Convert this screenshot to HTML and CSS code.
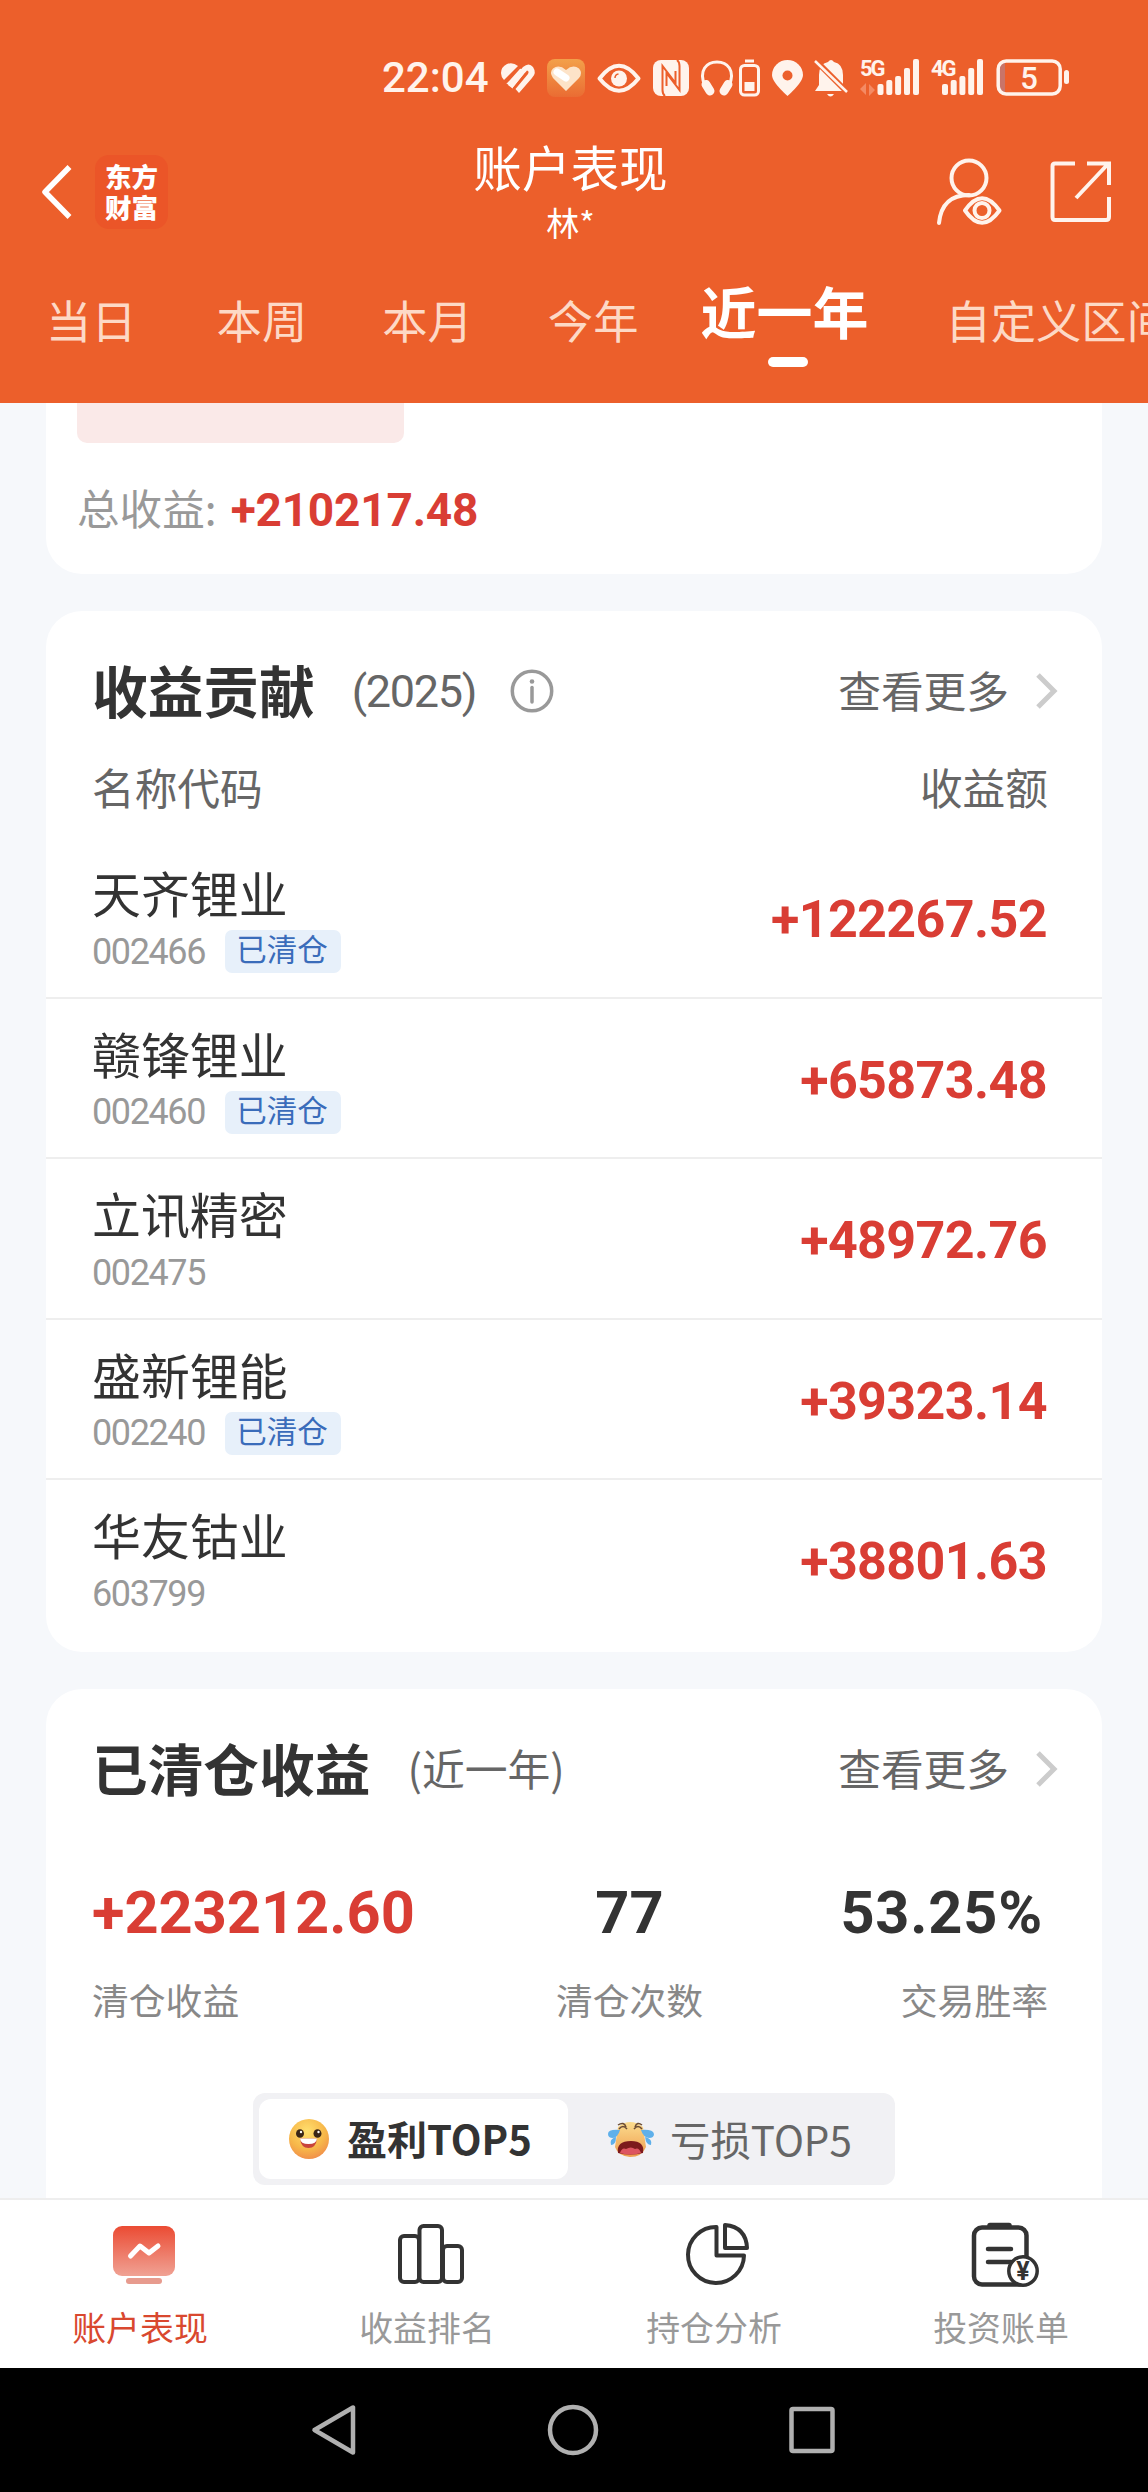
FILE: index.html
```html
<!DOCTYPE html>
<html lang="zh-CN">
<head>
  <meta charset="UTF-8" />
  <meta name="viewport" content="width=device-width, initial-scale=1.0" />
  <title>账户表现</title>
  <link rel="stylesheet" href="styles.css">
</head>
<body>

  <header class="header">
    <div class="status-bar">
      <span class="time">22:04</span>
      <svg width="34" height="38" viewBox="0 0 34 38" fill="#fff3ec">
        <path d="M17 7 Q12 3 6 5 Q0 8 0 14 Q0 18 3 21 Z"/>
        <path d="M7 26 L22 8 Q28 3 32 8 Q36 14 31 19 L18 34 L14.500 30 L27 15 Q28.500 12 26 11.500 L11.500 29.500 Z"/>
        <path d="M5 24 L18 9 L22 11 L9 27 Z"/>
        <path d="M5 24 L20 7.500 M12.500 29.500 L25 14" stroke="#ec5f2b" stroke-width="1.800"/>
      </svg>
      <svg width="38" height="38" viewBox="0 0 38 38">
        <defs><linearGradient id="hg" x1="0" y1="0" x2="0" y2="1"><stop offset="0" stop-color="#f3a04a"/><stop offset="1" stop-color="#ea6c33"/></linearGradient></defs>
        <rect width="38" height="38" rx="8" fill="url(#hg)"/>
        <path d="M19 32 L6 19 Q2 13 6 9.500 Q12 5 19 11 Q26 5 32 9.500 Q36 14 32 19 Z" fill="#fde3c8"/>
        <path d="M10 13 L19 19" stroke="#fff" stroke-width="7" stroke-linecap="round"/>
      </svg>
      <svg width="44" height="38" viewBox="0 0 44 38" fill="none" stroke="#fff3ec">
        <path d="M2.500 19.500 Q22 -6 41.500 19.500 Q22 44 2.500 19.500 Z" stroke-width="4" stroke-linejoin="round"/>
        <circle cx="22" cy="19.500" r="8" fill="#fff3ec" stroke="none"/>
        <path d="M18 19 Q18 15.500 21.500 15" stroke="#ec5f2b" stroke-width="1.500"/>
      </svg>
      <svg width="36" height="38" viewBox="0 0 36 38">
        <rect x="0" y="1" width="36" height="36" rx="8" fill="#fff3ec"/>
        <path d="M12 37 Q9.500 35 9.500 31 V7 L22.500 24 V12 M24 1 Q26.500 3 26.500 7 V31 L13.500 14 V27" fill="none" stroke="#ec5f2b" stroke-width="2"/>
      </svg>
      <svg width="59" height="38" viewBox="0 0 59 38" fill="none" stroke="#fff3ec">
        <path d="M4 27 C-3 11 6 3 16 3 C26 3 35 11 28 27" stroke-width="3"/>
        <path d="M5 25.500 L9 32 M27 25.500 L23 32" stroke-width="9" stroke-linecap="round"/>
        <rect x="39.500" y="6.500" width="18" height="29.500" rx="4" stroke-width="3"/>
        <path d="M44 2 H53" stroke-width="3"/>
        <rect x="43.500" y="23" width="10" height="9" fill="#fff3ec" stroke="none"/>
      </svg>
      <svg width="31" height="38" viewBox="0 0 31 38" fill="#fff3ec">
        <path d="M15.500 37 Q0 23 0 16 A15.500 15 0 0 1 31 16 Q31 23 15.500 37 Z"/>
        <circle cx="15.500" cy="16.500" r="5" fill="#ec5f2b"/>
      </svg>
      <svg width="33" height="38" viewBox="0 0 33 38" fill="#fff3ec">
        <path d="M0 32 L4 26 V16 Q4 5 13 3 Q16 -1 19 3 Q28 5 28 16 V28 L31 32 Z"/>
        <path d="M12 35 H19 Q15.500 40 12 35 Z"/>
        <path d="M0 1 L33 34" stroke="#ec5f2b" stroke-width="6"/>
        <path d="M0 2 L32 33" stroke="#fff3ec" stroke-width="2.500"/>
      </svg>
      <svg width="59" height="38" viewBox="0 0 59 38" fill="#fff3ec">
        <text x="0" y="17" class="net">5G</text>
        <path d="M0 30 L6 24 V36 Z M15 31 L9 25 V37 Z" fill="#f48a63"/>
        <rect x="17.500" y="25" width="6" height="11" rx="2"/>
        <rect x="26.300" y="21" width="6" height="15" rx="2"/>
        <rect x="35.100" y="17" width="6" height="19" rx="2"/>
        <rect x="44" y="9" width="6" height="27" rx="2"/>
        <rect x="53" y="0" width="6" height="36" rx="2"/>
      </svg>
      <svg width="52" height="38" viewBox="0 0 52 38" fill="#fff3ec">
        <text x="0" y="17" class="net">4G</text>
        <rect x="11" y="25" width="6" height="11" rx="2"/>
        <rect x="19.700" y="21" width="6" height="15" rx="2"/>
        <rect x="28.400" y="17" width="6" height="19" rx="2"/>
        <rect x="37.200" y="9" width="6" height="27" rx="2"/>
        <rect x="46" y="0" width="6" height="36" rx="2"/>
      </svg>
      <svg width="75" height="38" viewBox="0 0 75 38" fill="none">
        <rect x="5" y="4" width="5" height="29" fill="#c97468"/>
        <rect x="3.200" y="2" width="62" height="33" rx="8" stroke="#fff3ec" stroke-width="3.500"/>
        <rect x="69" y="11" width="5" height="14" rx="2.500" fill="#fff3ec"/>
        <text x="34" y="29.500" class="level">5</text>
      </svg>
    </div>

    <div class="title-bar">
      <svg class="back" width="32" height="54" viewBox="0 0 32 54" fill="none" stroke="#fff" stroke-width="5.500" stroke-linejoin="round">
        <path d="M27.500 2 L3 27 L27.500 52"/>
      </svg>
      <div class="logo">
        <div>东方</div>
        <div>财富</div>
      </div>
      <div class="title">
        <h1>账户表现</h1>
        <p>林*</p>
      </div>
      <svg class="user" width="68" height="68" viewBox="0 0 68 68" fill="none" stroke="#fff3ec" stroke-width="4">
        <circle cx="34" cy="20" r="17.500"/>
        <path d="M4 65 C6 45 17 37 34 37" stroke-linecap="round"/>
        <path d="M30 52.500 Q47 28 64.500 52.500 Q47 77 30 52.500 Z" stroke-linejoin="round"/>
        <circle cx="47" cy="52.500" r="7.500"/>
      </svg>
      <svg width="62" height="62" viewBox="0 0 62 62" fill="none" stroke="#fff3ec" stroke-width="4">
        <path d="M25 2.500 H5 Q2.500 2.500 2.500 5 V56 Q2.500 59 5 59 H56 Q59 59 59 56 V36"/>
        <path d="M37 2.500 H59 V24 M58 3 L26 37"/>
      </svg>
    </div>

    <nav class="ranges">
      <a class="first">当日</a>
      <a>本周</a>
      <a>本月</a>
      <a>今年</a>
      <a class="active">近一年</a>
      <a>自定义区间</a>
    </nav>
  </header>

  <main class="content">
    <section class="card total">
      <div class="pink-block"></div>
      <p class="total-line">总收益: <b class="num">+210217.48</b></p>
    </section>

    <section class="card contribution">
      <div class="card-head">
        <h2>收益贡献</h2>
        <span class="sub num">(2025)</span>
        <svg class="info" width="44" height="44" viewBox="0 0 44 44" fill="none" stroke="#999" stroke-width="3.500">
          <circle cx="22" cy="22" r="19.700"/>
          <path d="M22 18.500 V33" stroke-linecap="round"/>
          <circle cx="22" cy="12.500" r="2.300" fill="#999" stroke="none"/>
        </svg>
        <a class="more">查看更多</a>
        <svg class="arrow" width="22" height="36" viewBox="0 0 22 36" fill="none" stroke="#ccc" stroke-width="5">
          <path d="M2 2 L18 18 L2 34"/>
        </svg>
      </div>
      <div class="list-head">
        <span>名称代码</span>
        <span>收益额</span>
      </div>
      <ul class="stocks">
        <li>
          <div>
            <div class="name">天齐锂业</div>
            <div class="code"><span class="num">002466</span><em>已清仓</em></div>
          </div>
          <b class="num amount">+122267.52</b>
        </li>
        <li>
          <div>
            <div class="name">赣锋锂业</div>
            <div class="code"><span class="num">002460</span><em>已清仓</em></div>
          </div>
          <b class="num amount">+65873.48</b>
        </li>
        <li>
          <div>
            <div class="name">立讯精密</div>
            <div class="code"><span class="num">002475</span></div>
          </div>
          <b class="num amount">+48972.76</b>
        </li>
        <li>
          <div>
            <div class="name">盛新锂能</div>
            <div class="code"><span class="num">002240</span><em>已清仓</em></div>
          </div>
          <b class="num amount">+39323.14</b>
        </li>
        <li>
          <div>
            <div class="name">华友钴业</div>
            <div class="code"><span class="num">603799</span></div>
          </div>
          <b class="num amount">+38801.63</b>
        </li>
      </ul>
    </section>

    <section class="card cleared">
      <div class="card-head">
        <h2>已清仓收益</h2>
        <span class="sub">(近一年)</span>
        <a class="more">查看更多</a>
        <svg class="arrow" width="22" height="36" viewBox="0 0 22 36" fill="none" stroke="#ccc" stroke-width="5">
          <path d="M2 2 L18 18 L2 34"/>
        </svg>
      </div>
      <div class="stats">
        <div class="stat">
          <b class="num red">+223212.60</b>
          <span>清仓收益</span>
        </div>
        <div class="stat center">
          <b class="num">77</b>
          <span>清仓次数</span>
        </div>
        <div class="stat right">
          <b class="num">53.25%</b>
          <span>交易胜率</span>
        </div>
      </div>
      <div class="switch">
        <div class="option on">
          <svg width="40" height="54" viewBox="0 0 40 54">
            <defs><radialGradient id="smile" cx=".45" cy=".3" r=".75"><stop offset="0" stop-color="#ffdf6e"/><stop offset=".6" stop-color="#f7b749"/><stop offset="1" stop-color="#f08a4a"/></radialGradient></defs>
            <circle cx="20" cy="27" r="20" fill="url(#smile)"/>
            <ellipse cx="11" cy="21.500" rx="4" ry="4.300" fill="#3a2416"/>
            <ellipse cx="28.500" cy="21.500" rx="4" ry="4.300" fill="#3a2416"/>
            <circle cx="12" cy="20" r="1.200" fill="#fff"/>
            <circle cx="29.500" cy="20" r="1.200" fill="#fff"/>
            <path d="M11 26.500 H28 Q27 36 19.500 36 Q12 36 11 26.500 Z" fill="#c8433a"/>
            <path d="M11 26.500 H28 Q27.500 32 19.500 32 Q11.500 32 11 26.500 Z" fill="#fff"/>
          </svg>
          <span>盈利TOP5</span>
        </div>
        <div class="option">
          <svg width="46" height="36" viewBox="0 0 46 36">
            <defs><linearGradient id="cry" x1="0" y1="0" x2="0" y2="1"><stop offset="0" stop-color="#fbdc8e"/><stop offset="1" stop-color="#ef9d4e"/></linearGradient></defs>
            <path d="M10 6 Q22 -4 35 6 L38 26 Q34 36 22 36 Q10 35 7 26 Z" fill="url(#cry)"/>
            <path d="M10 4 Q16 0 18 6 M11 8 Q15 3 19 8 M34 4 Q29 0 27 6 M34 8 Q30 3 26 8" fill="none" stroke="#6b4c34" stroke-width="1.500"/>
            <path d="M12 9 Q0 8 0 13 Q0 17 5 17 Q10 16 12 9 Z M8 16 Q1 18 3 24 Q8 24 8 16 Z M33 9 Q45 8 46 13 Q46 17 41 17 Q35 16 33 9 Z M37 16 Q45 18 43 24 Q38 24 37 16 Z" fill="#5fb0ea"/>
            <path d="M10 32 Q8 20 23 20 Q37 20 35 32 Q22 35 10 32 Z" fill="#7d1a1c"/>
            <path d="M12 32 Q14 26 18 28 Q23 25 27 28 Q31 26 33 32 Q22 35 12 32 Z" fill="#dd5560"/>
          </svg>
          <span>亏损TOP5</span>
        </div>
      </div>
    </section>
  </main>

  <nav class="tabbar">
    <a class="tab current">
      <svg width="66" height="66" viewBox="0 0 66 66" fill="none">
        <defs><linearGradient id="rd" x1="0" y1="0" x2="0" y2="1"><stop offset="0" stop-color="#eb4b33"/><stop offset="1" stop-color="#f0a294"/></linearGradient></defs>
        <rect x="2" y="4" width="62" height="50" rx="9" fill="url(#rd)"/>
        <path d="M19.500 34 L29 24 L38 31 L47 24" stroke="#fff" stroke-width="5" stroke-linecap="round" stroke-linejoin="round"/>
        <rect x="15" y="56" width="36" height="6" rx="3" fill="#e79b8e"/>
      </svg>
      <span>账户表现</span>
    </a>
    <a class="tab">
      <svg width="66" height="66" viewBox="0 0 66 66" fill="none" stroke="#333" stroke-width="4">
        <rect x="2" y="14" width="19" height="46" rx="4"/>
        <rect x="21.500" y="4" width="22.500" height="56" rx="4"/>
        <rect x="45" y="24" width="19" height="36" rx="4"/>
      </svg>
      <span>收益排名</span>
    </a>
    <a class="tab">
      <svg width="66" height="66" viewBox="0 0 66 66" fill="none" stroke="#333" stroke-width="4" stroke-linejoin="round">
        <path d="M31.500 5 V33.500 H59 A28 28 0 1 1 31.500 5 Z"/>
        <path d="M40 3 V26 H62 Q61 5 40 3 Z"/>
      </svg>
      <span>持仓分析</span>
    </a>
    <a class="tab">
      <svg width="68" height="66" viewBox="0 0 68 66" fill="none" stroke="#333" stroke-width="4.500">
        <rect x="3" y="5.500" width="52.500" height="57" rx="8"/>
        <path d="M19 3.500 H38" stroke-width="5.500" stroke-linecap="round"/>
        <path d="M17 27 H40 M17 40 H40" stroke-linecap="round"/>
        <circle cx="52" cy="49" r="14.200" fill="#fff" stroke-width="3.500"/>
        <text x="52" y="57.500" class="yen">¥</text>
      </svg>
      <span>投资账单</span>
    </a>
  </nav>

  <footer class="sys-nav">
    <svg width="46" height="52" viewBox="0 0 46 52"><path d="M42 3.500 V48.500 L3.500 26 Z"/></svg>
    <svg width="52" height="52" viewBox="0 0 52 52"><circle cx="26" cy="26" r="23"/></svg>
    <svg width="46" height="52" viewBox="0 0 46 52"><rect x="2.500" y="5" width="41" height="42" rx="1.500"/></svg>
  </footer>

</body>
</html>
```
FILE: styles.css
```css
* {
  box-sizing: border-box;
  margin: 0;
  padding: 0;
}

body {
  width: 1148px;
  height: 2492px;
  display: flex;
  flex-direction: column;
  overflow: hidden;
  font-family: "Noto Sans CJK SC", sans-serif;
  color: #333;
  background: #f6f8fb;
}

svg {
  flex: none;
  display: block;
  overflow: visible;
}

.num {
  font-family: Roboto, sans-serif;
}

/* header */
.header {
  height: 403px;
  background: #ec5f2b;
  color: #fff;
  overflow: hidden;
}

.status-bar {
  display: flex;
  gap: 12px;
  height: 97px;
  padding: 59px 0 0 382px;
}

.time {
  width: 107px;
  font: 500 42px/38px Roboto, sans-serif;
  color: #fff3ec;
}

.net {
  font: 700 22px Roboto, sans-serif;
  letter-spacing: -2px;
}

.level {
  font: 500 31px Roboto, sans-serif;
  text-anchor: middle;
  fill: #fff3ec;
}

.title-bar {
  display: grid;
  grid-template-columns: 53px 73px 1fr 68px 62px;
  align-items: center;
  height: 134px;
  margin-top: 28px;
  padding: 0 36px 0 42px;
}

.logo {
  height: 74px;
  padding-top: 5px;
  border-radius: 14px;
  background: #eb5528;
  font-size: 26.5px;
  font-weight: 900;
  line-height: 31px;
  text-align: center;
}

.title {
  margin: 0 9px 6px 0;
  text-align: center;
}

.title h1 {
  font-size: 48.6px;
  font-weight: 400;
  line-height: 60px;
}

.title p {
  margin-top: 6px;
  font-size: 33px;
  line-height: 40px;
}

.user {
  margin-left: -47px;
}

.ranges {
  display: flex;
  align-items: flex-start;
  gap: 75px;
  padding: 18px 0 0 46px;
  white-space: nowrap;
}

.ranges a {
  flex: none;
  padding-top: 12px;
  font-size: 45.3px;
  line-height: 60px;
  color: #fdd9c6;
}

.ranges .first {
  margin-right: 5px;
}

.ranges .active {
  display: flex;
  flex-direction: column;
  align-items: center;
  margin: 0 2px 0 -13px;
  padding: 0;
  font-size: 56px;
  font-weight: 700;
  line-height: 66px;
  color: #fff;
}

.active::after {
  content: "";
  width: 40px;
  height: 10px;
  margin: 14px 0 0 8px;
  border-radius: 5px;
  background: #fff;
}

/* cards */
.content {
  flex: 1;
  overflow: hidden;
  padding: 0 46px;
}

.card {
  margin-bottom: 37px;
  border-radius: 36px;
  background: #fff;
}

.total {
  height: 171px;
  border-radius: 0 0 36px 36px;
}

.pink-block {
  width: 327px;
  height: 40px;
  margin-left: 31px;
  border-radius: 0 0 10px 10px;
  background: #fae9e8;
}

.total-line {
  display: flex;
  gap: 14px;
  margin: 34px 0 0 31px;
  font-size: 42.6px;
  line-height: 60px;
  color: #999;
}

.total-line b {
  padding-top: 3px;
  font-size: 46px;
  letter-spacing: -.2px;
  color: #d93d34;
}

.contribution {
  height: 1041px;
  padding-top: 40px;
}

.cleared {
  height: 600px;
  padding-top: 40px;
}

.card-head {
  display: flex;
  align-items: center;
  height: 80px;
  padding: 0 44px 0 46px;
}

.card-head h2 {
  padding-bottom: 5px;
  font-size: 55.7px;
  line-height: 80px;
}

.card-head .sub {
  margin-left: 37px;
  padding-bottom: 5px;
  font-size: 42.8px;
  color: #666;
}

.card-head .sub.num {
  padding: 0;
  font-size: 45px;
  letter-spacing: -1.3px;
}

.info {
  margin-left: 34px;
}

.more {
  margin-left: auto;
  padding-bottom: 5px;
  font-size: 42.7px;
  color: #666;
}

.arrow {
  margin-left: 27px;
}

.list-head {
  display: flex;
  justify-content: space-between;
  margin-top: 25px;
  padding: 0 54px 0 46px;
  font-size: 42.7px;
  line-height: 60px;
  color: #666;
}

.stocks {
  margin-top: 22px;
  list-style: none;
}

.stocks li {
  display: flex;
  justify-content: space-between;
  height: 160.6px;
  padding: 24px 55px 0 46px;
  border-bottom: 2px solid #eee;
}

.stocks li:last-child {
  border-bottom: none;
}

.name {
  font-size: 48.9px;
  line-height: 60px;
}

.code {
  display: flex;
  align-items: center;
  height: 43px;
  margin-top: 8px;
  font-size: 36px;
  color: #999;
}

.code .num {
  width: 113px;
  letter-spacing: -1.4px;
}

.code em {
  width: 116px;
  height: 43px;
  margin-left: 20px;
  padding-right: 2px;
  border-radius: 7px;
  background: #e7f0fa;
  font-size: 30.5px;
  font-style: normal;
  line-height: 36px;
  text-align: center;
  color: #3a6cba;
}

.amount {
  margin-top: 28px;
  font-size: 52px;
  line-height: 60px;
  letter-spacing: -.6px;
  color: #d93d34;
}

.stats {
  display: grid;
  grid-template-columns: 463px 149px 1fr;
  padding: 62px 54px 0 46px;
}

.stat {
  display: flex;
  flex-direction: column;
}

.stat b {
  font-size: 59.5px;
  line-height: 84px;
}

.stat span {
  margin-top: 19px;
  font-size: 36.8px;
  line-height: 50px;
  color: #888;
}

.stat .red {
  color: #d93d34;
}

.stat.center {
  align-items: center;
}

.stat.right {
  align-items: flex-end;
}

.stat.right b {
  padding-right: 5px;
  letter-spacing: .8px;
}

.switch {
  display: flex;
  width: 642px;
  height: 92px;
  margin: 69px 0 0 207px;
  padding: 6px;
  border-radius: 12px;
  background: #f1f1f4;
}

.option {
  display: flex;
  align-items: center;
  gap: 16px;
  width: 309px;
  padding-left: 40px;
  font-size: 40.4px;
  color: #666;
}

.option span {
  padding-bottom: 2px;
}

.option.on {
  gap: 18px;
  padding-left: 30px;
  border-radius: 12px;
  background: #fff;
  font-weight: 700;
  font-size: 40px;
  color: #333;
}

/* bottom bars */
.tabbar {
  display: flex;
  height: 170px;
  border-top: 2px solid #eee;
  background: #fff;
}

.tab {
  flex: 1;
  display: flex;
  flex-direction: column;
  align-items: center;
  padding-top: 22px;
  font-size: 33.9px;
  line-height: 48px;
  color: #999;
}

.tab span {
  margin: 15px 7px 0 0;
}

.current {
  color: #d9482f;
}

.yen {
  font: 700 25px Roboto, sans-serif;
  text-anchor: middle;
  fill: #333;
  stroke: none;
}

.sys-nav {
  display: flex;
  justify-content: center;
  gap: 190px;
  height: 124px;
  padding: 36px 2px 0 0;
  background: #000;
}

.sys-nav svg {
  fill: none;
  stroke: #b0b0b0;
  stroke-width: 4.5;
  stroke-linejoin: round;
}
```
